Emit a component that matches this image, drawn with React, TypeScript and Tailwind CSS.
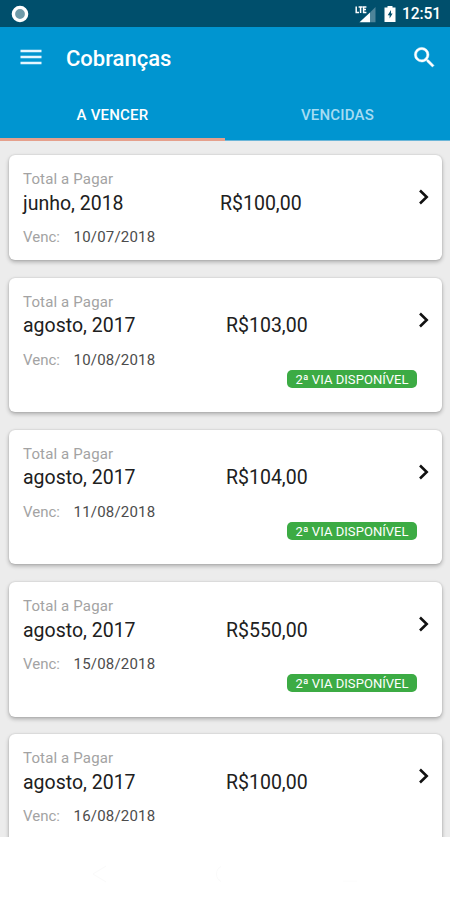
type Bill = {
  month: string;
  amount: string;
  due: string;
  secondCopy?: boolean;
};

const bills: Bill[] = [
  { month: "junho, 2018", amount: "R$100,00", due: "10/07/2018" },
  { month: "agosto, 2017", amount: "R$103,00", due: "10/08/2018", secondCopy: true },
  { month: "agosto, 2017", amount: "R$104,00", due: "11/08/2018", secondCopy: true },
  { month: "agosto, 2017", amount: "R$550,00", due: "15/08/2018", secondCopy: true },
  { month: "agosto, 2017", amount: "R$100,00", due: "16/08/2018" },
];

function StatusBar() {
  return (
    <div className="flex h-[27px] shrink-0 items-center bg-[#004f6c] pt-px text-white">
      <svg className="ml-[11px] size-[18px]" viewBox="0 0 18 18">
        <circle cx="9" cy="9" r="6.6" fill="#6f9aa8" stroke="#fff" strokeWidth="3.400" />
      </svg>
      <svg className="ml-auto h-[18px] w-[22px]" viewBox="0 0 22 18" fill="none">
        <path d="M20.500 2V17.200H15V7.500Z" fill="#4d8499" />
        <path d="M15 7.500V17.200H4.500Z" fill="#fff" />
        <path d="M1.200 1.500V7.400H4M3.600 2H7.600M5.600 2V8M11.400 2H8.600V7.400H11.400M8.600 4.600H11" stroke="#fff" strokeWidth="1.500" />
      </svg>
      <svg className="ml-[7px] h-[18px] w-3" viewBox="0 0 12 18">
        <path d="M3.500 1H8.500V2.600H11.500V17H.5V2.600H3.500Z" fill="#fff" />
        <path d="M7 5L3.700 10.300H5.600V13.600L8.600 8.600H7Z" fill="#004f6c" />
      </svg>
      <span className="mr-[9px] ml-[6px] pt-px text-[15.600px] leading-none font-medium tracking-[-0.100px]">12:51</span>
    </div>
  );
}

function Toolbar() {
  return (
    <div className="flex h-[63px] items-center text-white">
      <svg className="mb-[3px] ml-[20px] h-[16px] w-[22px]" viewBox="0 0 22 16" stroke="#e4f6ff" strokeWidth="2.600">
        <path d="M.5 2H21.500M.5 8H21.500M.5 14H21.500" />
      </svg>
      <h1 className="ml-[24px] text-[22px] leading-none font-medium">Cobranças</h1>
      <svg className="mr-[12px] mb-[3px] ml-auto size-[27px]" viewBox="0 0 24 24" fill="currentColor" stroke="currentColor" strokeWidth="0.400">
        <path d="M15.500 14h-.79l-.28-.27A6.471 6.471 0 0 0 16 9.500 6.500 6.500 0 1 0 9.500 16c1.610 0 3.090-.59 4.230-1.570l.27.28v.79l5 4.990L20.490 19l-4.990-5zm-6 0C7.010 14 5 11.990 5 9.500S7.010 5 9.500 5 14 7.010 14 9.500 11.990 14 9.500 14z" />
      </svg>
    </div>
  );
}

function Tabs() {
  return (
    <div className="grid h-[51px] grid-cols-2 text-center text-[15px] leading-[51px] font-medium tracking-[0.200px]">
      <div className="h-[51px] border-b-[3px] border-[#e5a08c] text-white">A VENCER</div>
      <div className="h-[51px] border-b border-[#6bb6d8] text-[#a5dcf3]">VENCIDAS</div>
    </div>
  );
}

function BillCard({ bill }: { bill: Bill }) {
  const junho = bill.month.startsWith("junho");
  return (
    <div
      className={`flex shrink-0 flex-col rounded-[6px] bg-white pr-[12.500px] pl-[14px] shadow-[0_2px_4px_rgba(0,0,0,0.28),0_0_2px_rgba(0,0,0,0.14)] ${
        junho ? "h-[105px]" : "h-[134.500px]"
      }`}
    >
      <div className="mt-[15px] text-[15px] leading-[18px] tracking-[0.150px] text-[#a3a3a3]">Total a Pagar</div>
      <div className="flex h-[30px] items-center text-[19.500px] leading-[30px] text-[#202020]">
        <span className={junho ? "w-[197px] pt-px" : "w-[203px] pt-px"}>{bill.month}</span>
        <span className="pt-px">{bill.amount}</span>
        <svg className="mb-[12px] ml-auto h-[16px] w-[12px]" viewBox="0 0 12 16" fill="none" stroke="#111" strokeWidth="2.600">
          <path d="M2 1.500L8.700 8L2 14.500" />
        </svg>
      </div>
      <div className="mt-[10px] flex text-[15px] leading-[18px]">
        <span className="w-[50.500px] text-[#a3a3a3]">Venc:</span>
        <span className="tracking-[0.200px] text-[#4c4c4c]">{bill.due}</span>
      </div>
      {bill.secondCopy && (
        <div className="mt-px mr-[12.500px] h-[18px] w-[130px] self-end rounded-[5px] bg-[#3cab44] text-center text-[13px] leading-[20px] tracking-[0.050px] text-white">
          2ª VIA DISPONÍVEL
        </div>
      )}
    </div>
  );
}

export default function App() {
  return (
    <div className="flex h-[900px] w-[450px] flex-col overflow-hidden bg-white font-['Roboto',sans-serif]">
      <StatusBar />
      <header className="h-[114px] shrink-0 bg-[#0095d0]">
        <Toolbar />
        <Tabs />
      </header>
      <main className="flex h-[696px] shrink-0 flex-col gap-[17.700px] overflow-hidden bg-[#ececec] pt-[14px] pr-[8px] pl-[9px]">
        {bills.map((bill) => (
          <BillCard key={bill.due} bill={bill} />
        ))}
      </main>
      <nav className="flex flex-1 items-center justify-between bg-white px-[91px] pt-[10px]">
        <svg className="size-[18px]" viewBox="0 0 18 18" fill="none" stroke="#fafafa">
          <path d="M15 1L2 9L15 17" />
        </svg>
        <svg className="size-[18px]" viewBox="0 0 18 18" fill="none" stroke="#fafafa">
          <path d="M5 1.500A8.500 8.500 0 0 0 5 16.500" />
        </svg>
        <svg className="size-[18px]" viewBox="0 0 18 18" fill="none" stroke="#fcfcfc">
          <path d="M2 16H16" />
        </svg>
      </nav>
    </div>
  );
}
